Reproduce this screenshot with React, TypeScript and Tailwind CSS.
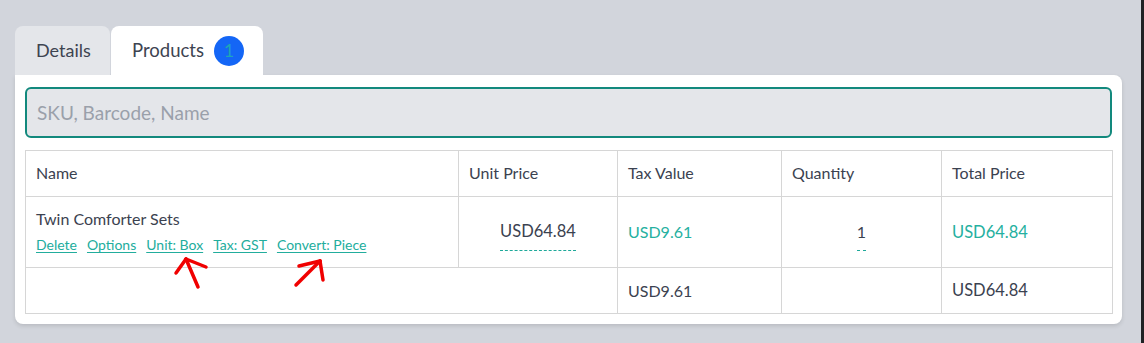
import React from 'react';

const links = ['Delete', 'Options', 'Unit: Box', 'Tax: GST', 'Convert: Piece'];

function Arrows() {
  // red hand-drawn annotation arrows over the link row
  return (
    <svg className="absolute left-0 top-0 pointer-events-none" width="400" height="343">
      <g stroke="#f00000" strokeWidth="3.5" strokeLinecap="round" fill="none">
        <path d="M186 259 L198 287" />
        <path d="M186 259 L176 273" />
        <path d="M186 259 L206 267" />
        <path d="M320 261 L296 285" />
        <path d="M320 261 L299 266" />
        <path d="M320 261 L323 280" />
      </g>
    </svg>
  );
}

export default function App() {
  return (
    <div className="relative h-[343px] w-[1144px] bg-[#d2d5dc] border-r-[3px] border-[#202124] pt-[26px] pl-[15px] font-['Lato','Liberation_Sans',sans-serif] text-[#3b4250] overflow-hidden">
      {/* TABS */}
      <div className="flex gap-px h-[49px]">
        <div className="w-[95px] flex items-center pl-[21px] bg-[#e4e6ea] rounded-t-lg text-[18px] text-[#3d4451]">
          Details
        </div>
        <div className="w-[152px] flex items-center pl-[21px] gap-[10px] bg-white rounded-t-lg text-[18.5px] text-[#3d4451]">
          Products
          <span className="w-[30px] h-[30px] rounded-full bg-[#1466f6] flex items-center justify-center text-[18px] text-[#1ea5b8]">
            1
          </span>
        </div>
      </div>

      {/* CARD */}
      <div className="w-[1107px] h-[249px] bg-white rounded-b-lg rounded-tr-lg shadow-[0_2px_4px_rgba(0,0,0,0.12)] px-[10px] pt-[12px]">
        <input
          className="w-full h-[51px] rounded-md border-2 border-[#12897d] bg-[#e4e6ea] pl-[10px] text-[19px] placeholder:text-[#9aa0aa] outline-none"
          placeholder="SKU, Barcode, Name"
        />

        <table className="mt-[12px] w-[1087px] border-collapse table-fixed text-[16px]">
          <colgroup>
            <col className="w-[433px]" />
            <col className="w-[159px]" />
            <col className="w-[164px]" />
            <col className="w-[160px]" />
            <col className="w-[171px]" />
          </colgroup>
          <thead>
            <tr className="h-[46px]">
              {['Name', 'Unit Price', 'Tax Value', 'Quantity', 'Total Price'].map((h) => (
                <th key={h} className="border border-[#d6d6d6] text-left font-normal pl-[10px] pb-[2px]">
                  {h}
                </th>
              ))}
            </tr>
          </thead>
          <tbody>
            <tr className="h-[71px]">
              <td className="border border-[#d6d6d6] pl-[10px] align-top pt-[10px]">
                <div className="text-[16px]">Twin Comforter Sets</div>
                <div className="flex gap-[10px] mt-[3px] text-[14px] text-[#22ad9d] underline underline-offset-2">
                  {links.map((l) => (
                    <span key={l}>{l}</span>
                  ))}
                </div>
              </td>
              <td className="border border-[#d6d6d6] text-center">
                <span className="inline-block pb-[6px] border-b border-dashed border-[#1ea99a] mt-[6px] text-[16.5px]">
                  USD64.84
                </span>
              </td>
              <td className="border border-[#d6d6d6] pl-[10px] text-[#25b0a0]">USD9.61</td>
              <td className="border border-[#d6d6d6] text-center">
                <span className="inline-block pb-[6px] border-b border-dashed border-[#1ea99a] mt-[6px]">
                  1
                </span>
              </td>
              <td className="border border-[#d6d6d6] pl-[10px] text-[#25b0a0] text-[16.5px]">USD64.84</td>
            </tr>
            <tr className="h-[46px]">
              <td colSpan={2} className="border border-[#d6d6d6]" />
              <td className="border border-[#d6d6d6] pl-[10px]">USD9.61</td>
              <td className="border border-[#d6d6d6]" />
              <td className="border border-[#d6d6d6] pl-[10px] text-[16.5px]">USD64.84</td>
            </tr>
          </tbody>
        </table>
      </div>

      <Arrows />
    </div>
  );
}
